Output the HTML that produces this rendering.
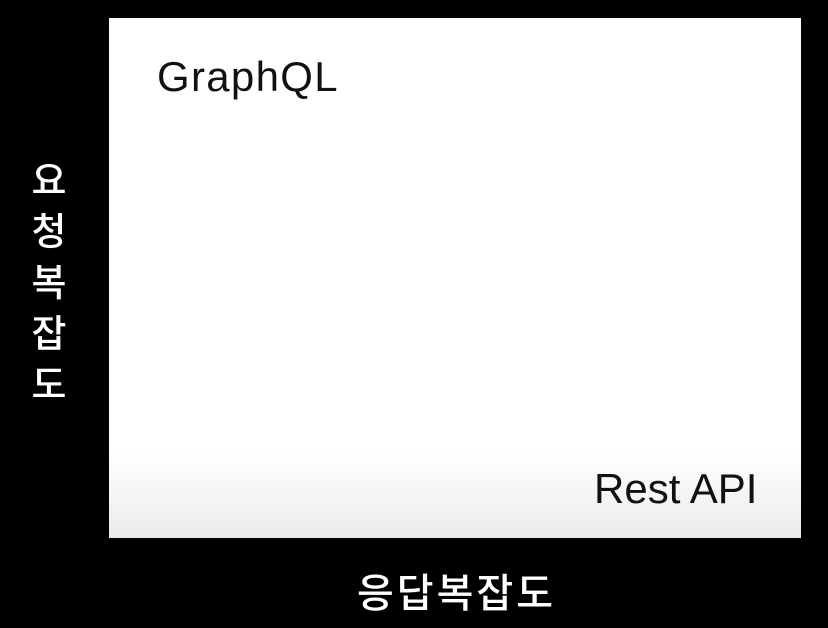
<!DOCTYPE html>
<html><head><meta charset="utf-8"><style>
html,body{margin:0;padding:0;background:#000;width:828px;height:628px;overflow:hidden;position:relative;font-family:"Liberation Sans","Noto Sans CJK KR",sans-serif}
.box{position:absolute;left:109px;top:18px;width:692px;height:520px;background:linear-gradient(#fff 0,#fff 435px,#ebebeb 520px);}
.t{position:absolute;color:#111;font-size:42px;line-height:1;white-space:nowrap}
.v{position:absolute;left:22px;top:152px;width:54px;color:#fff;font-size:38px;line-height:51px;text-align:center;font-family:"Noto Sans CJK KR",sans-serif;font-weight:500}
.h{position:absolute;left:357px;top:566px;color:#fff;font-size:40px;line-height:1.2;letter-spacing:3px;font-family:"Noto Sans CJK KR",sans-serif;font-weight:500}
</style></head><body>
<div class="box"></div>
<div class="t" style="left:157px;top:56px;letter-spacing:1.3px">GraphQL</div>
<div class="t" style="left:594px;top:468px">Rest API</div>
<div class="v">요<br>청<br>복<br>잡<br>도</div>
<div class="h">응답복잡도</div>
</body></html>
